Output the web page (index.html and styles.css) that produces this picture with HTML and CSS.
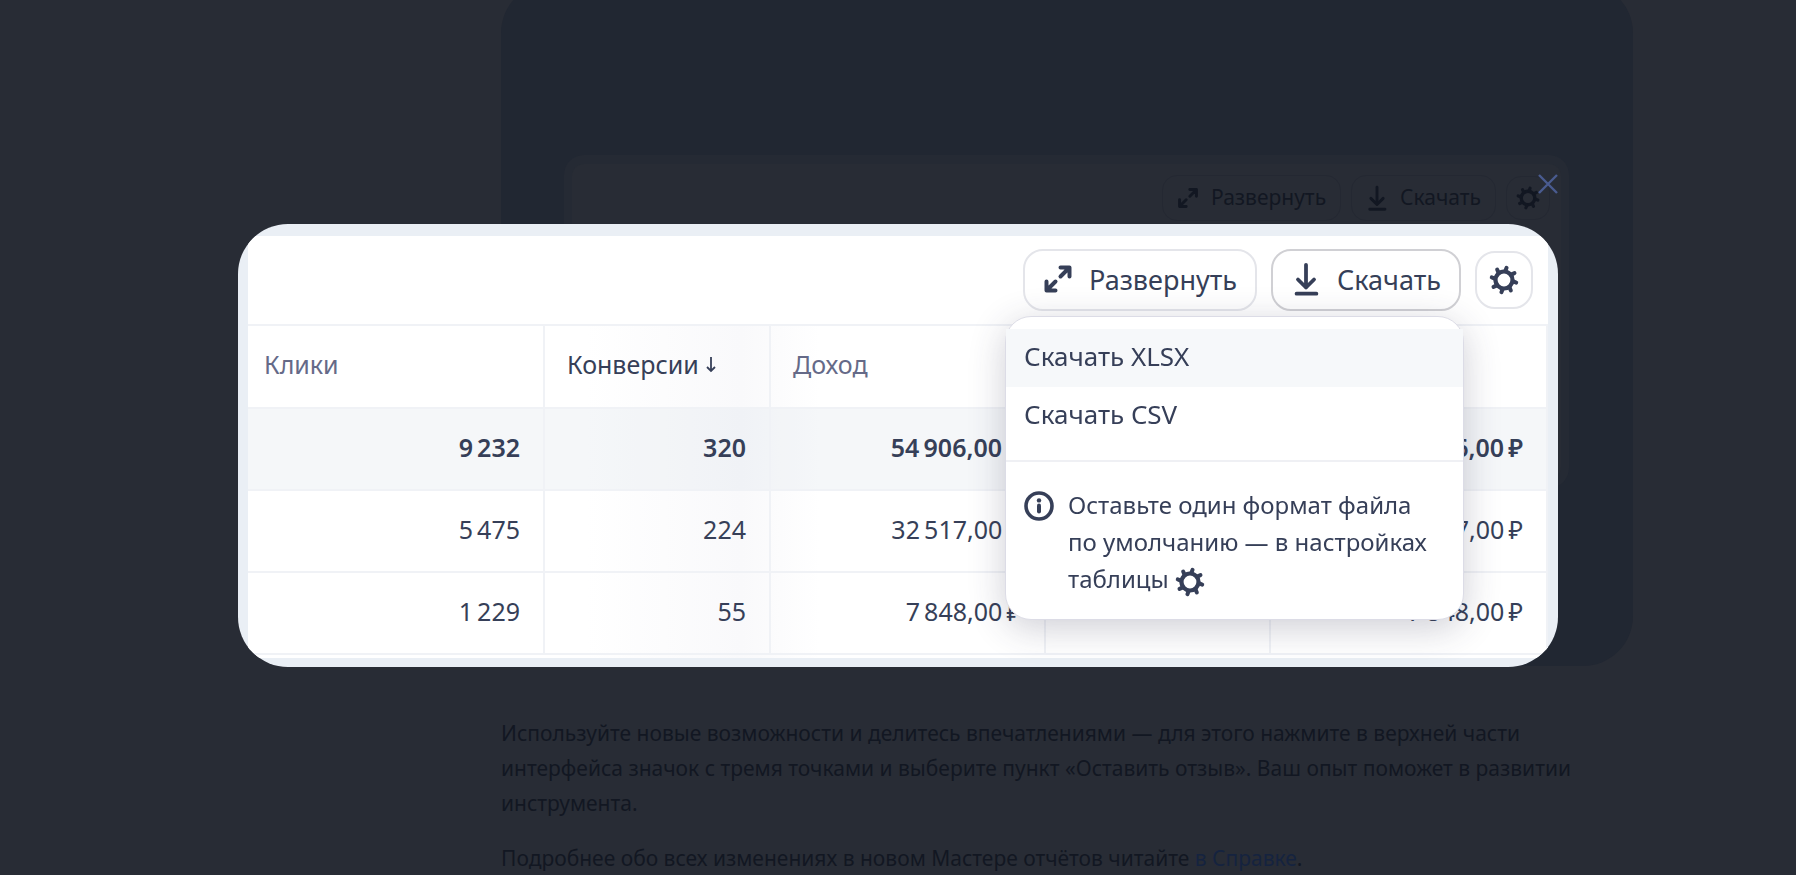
FILE: index.html
```html
<!DOCTYPE html>
<html lang="ru">
<head>
<meta charset="utf-8">
<title>Мастер отчётов</title>
<link rel="stylesheet" href="styles.css">
</head>
<body>
<svg class="sprite" aria-hidden="true">
  <symbol id="i-expand" viewBox="0 0 30 30"><path d="M17.500 3.500h9v9M26 4l-8.500 8.500M12.500 26.500h-9v-9M4 26l8.500-8.500" fill="none" stroke="currentColor" stroke-width="4" stroke-linecap="round" stroke-linejoin="round"/></symbol>
  <symbol id="i-download" viewBox="0 0 30 36"><path d="M15 3v24M6.500 18.500l8.500 8.500 8.500-8.500M5 33.500h21" fill="none" stroke="currentColor" stroke-width="4" stroke-linecap="round" stroke-linejoin="round"/></symbol>
  <symbol id="i-gear" viewBox="-15 -15 30 30">
    <circle r="8.500" fill="none" stroke="currentColor" stroke-width="4.200"/>
    <g stroke="currentColor" stroke-width="4" stroke-linecap="round" transform="rotate(10)">
      <path id="tooth" d="M-.2-9.500L.4-12.500"/>
      <use href="#tooth" transform="rotate(45)"/><use href="#tooth" transform="rotate(90)"/><use href="#tooth" transform="rotate(135)"/><use href="#tooth" transform="rotate(180)"/><use href="#tooth" transform="rotate(225)"/><use href="#tooth" transform="rotate(270)"/><use href="#tooth" transform="rotate(315)"/>
    </g>
  </symbol>
</svg>

<main class="page">
  <article class="article">
    <section class="card">
      <div class="preview">
        <div class="preview-inner">
          <div class="tool tool-wide"><svg><use href="#i-expand"/></svg>Развернуть</div>
          <div class="tool tool-down"><svg><use href="#i-download"/></svg>Скачать</div>
          <div class="tool tool-gear"><svg><use href="#i-gear"/></svg></div>
        </div>
      </div>
    </section>
    <p>Используйте новые возможности и делитесь впечатлениями — для этого нажмите в верхней части интерфейса значок с тремя точками и выберите пункт «Оставить отзыв». Ваш опыт поможет в развитии инструмента.</p>
    <p>Подробнее обо всех изменениях в новом Мастере отчётов читайте <a href="#help">в Справке</a>.</p>
  </article>
</main>

<div class="overlay">
  <div class="dialog" role="dialog" aria-label="Скачать отчёт">
    <button class="close" type="button" aria-label="Закрыть"><svg viewBox="0 0 20 20"><path d="M1 1l18 18M19 1L1 19" stroke="currentColor" stroke-width="2.400" fill="none"/></svg></button>
    <div class="frame">
      <div class="toolbar">
        <button class="btn btn-wide" type="button"><svg><use href="#i-expand"/></svg>Развернуть</button>
        <div class="download">
          <button class="btn btn-down" type="button"><svg><use href="#i-download"/></svg>Скачать</button>
          <div class="menu">
            <button class="item item-active" type="button">Скачать XLSX</button>
            <button class="item" type="button">Скачать CSV</button>
            <div class="hint">
              <svg class="info" viewBox="0 0 30 30"><circle cx="15" cy="15" r="13" fill="none" stroke="currentColor" stroke-width="3.600"/><circle cx="15" cy="9.400" r="2.200" fill="currentColor"/><path d="M15 14.500v6" stroke="currentColor" stroke-width="4" stroke-linecap="round"/></svg>
              <p>Оставьте один формат файла<br>по умолчанию — в настройках<br>таблицы <svg class="inline-gear"><use href="#i-gear"/></svg></p>
            </div>
          </div>
        </div>
        <button class="btn btn-gear" type="button" aria-label="Настройки"><svg><use href="#i-gear"/></svg></button>
      </div>
      <div class="sheet">
        <table class="grid">
          <colgroup><col class="c1"><col class="c2"><col class="c3"><col class="c4"><col class="c5"></colgroup>
          <thead><tr><th>Клики</th><th class="sorted">Конверсии <svg viewBox="0 0 12 18"><path d="M6 1v14M2 11l4 4 4-4" fill="none" stroke="currentColor" stroke-width="1.800"/></svg></th><th>Доход</th><th></th><th></th></tr></thead>
          <tbody>
            <tr class="total"><td>9&#8201;232</td><td>320</td><td>54&#8201;906,00&#8201;₽</td><td></td><td>54&#8201;906,00&#8201;₽</td></tr>
            <tr><td>5&#8201;475</td><td>224</td><td>32&#8201;517,00&#8201;₽</td><td></td><td>32&#8201;517,00&#8201;₽</td></tr>
            <tr><td>1&#8201;229</td><td>55</td><td>7&#8201;848,00&#8201;₽</td><td></td><td>7&#8201;848,00&#8201;₽</td></tr>
          </tbody>
        </table>
      </div>
    </div>
  </div>
</div>
</body>
</html>
```

FILE: styles.css
```css
* { box-sizing: border-box; }
html, body { height: 100%; }
body {
  margin: 0;
  overflow: hidden;
  background: #282c35;
  color: #121722;
  font-family: "Noto Sans", "Open Sans", sans-serif;
}
button { font: inherit; color: inherit; cursor: pointer; }
.sprite { position: absolute; width: 0; height: 0; }

.page { padding: 0 163px 0 501px; }
.article { margin-top: -17px; font-size: 21px; line-height: 35px; }
.article p { margin: 0 0 20px; }
.article a { color: #15233f; text-decoration: none; }
.card {
  margin-bottom: 50px;
  padding: 172px 64px 178px 63px;
  border-radius: 50px;
  background: #212732;
}
.preview {
  padding: 9px 8px;
  border-radius: 20px;
  background: #252a34;
}
.preview-inner {
  display: flex;
  justify-content: flex-end;
  align-items: center;
  gap: 10px;
  height: 315px;
  padding: 10px 11px 258px;
  border-radius: 12px;
  background: #282c35;
  font-size: 21px;
}
.tool {
  display: flex;
  align-items: center;
  height: 46px;
  padding: 0 14px;
  gap: 12px;
  border: 1px solid #242832;
  border-radius: 15px;
}
.tool svg { width: 22px; height: 26px; }
.tool-gear { height: 44px; padding: 0 9px; }
.tool-gear svg { width: 24px; }

.overlay {
  position: fixed;
  inset: 0;
  display: flex;
  justify-content: center;
  align-items: center;
  padding-top: 16px;
}
.dialog {
  position: relative;
  width: 1320px;
  max-width: 100%;
  color: #363f58;
}
.close {
  position: absolute;
  right: 0;
  top: -50px;
  width: 20px;
  height: 20px;
  padding: 0;
  border: 0;
  background: none;
  color: #4a5b90;
}
.close svg { display: block; width: 20px; height: 20px; }
.frame {
  overflow: hidden;
  padding: 12px 10px 9px;
  border-radius: 50px;
  background: #eaeff5;
}
.toolbar {
  display: flex;
  justify-content: flex-end;
  align-items: center;
  gap: 14px;
  height: 88px;
  padding: 0 15px 0 0;
  background: #fff;
  font-size: 27px;
}
.btn {
  display: flex;
  align-items: center;
  gap: 16px;
  height: 62px;
  padding: 0 18px 2px;
  border: 2px solid #e4e5ea;
  border-radius: 20px;
  background: #fff;
}
.btn svg { width: 30px; height: 34px; }
.btn-down { border-color: #d0d0d4; }
.btn-gear { height: 58px; padding: 0 12px; }
.download { position: relative; }
.menu {
  position: absolute;
  z-index: 1;
  top: 67px;
  right: -3px;
  width: 459px;
  padding: 12px 0 22px;
  border: 1px solid #dcdce6;
  border-radius: 26px;
  background: #fff;
  box-shadow: 0 8px 36px rgba(50, 50, 80, .24);
  font-size: 26px;
}
.item {
  display: block;
  width: 100%;
  height: 58px;
  padding: 0 18px 4px;
  border: 0;
  background: none;
  text-align: left;
}
.item-active { background: #f6f8fa; }
.hint {
  display: flex;
  gap: 14px;
  margin-top: 15px;
  padding: 24px 18px 0;
  border-top: 2px solid #eff0f4;
  font-size: 24px;
  line-height: 37px;
}
.hint p { margin: 0; white-space: nowrap; }
.info { flex: none; width: 30px; height: 30px; margin-top: 5px; }
.inline-gear { width: 30px; height: 30px; vertical-align: -9px; }

.sheet {
  padding-bottom: 3px;
  background: linear-gradient(90deg, #fff 26%, #f9f9fb 38%, #fff 44%);
}
.grid {
  width: 100%;
  table-layout: fixed;
  border-collapse: separate;
  border-spacing: 0;
  border-bottom: 2px solid #f0f2f6;
  font-size: 25px;
}
.c1 { width: 297px; }
.c2 { width: 226px; }
.c3 { width: 275px; }
.c4 { width: 225px; }
.grid th, .grid td {
  height: 82px;
  padding: 0 23px 4px;
  border-top: 2px solid #f0f2f6;
  border-right: 2px solid #f0f2f6;
  text-align: right;
  white-space: nowrap;
}
.grid th {
  height: 83px;
  padding: 0 16px 5px;
  text-align: left;
  font-weight: 400;
  color: #656a88;
}
.grid th + th { padding-left: 22px; }
.grid th.sorted { color: #363f58; }
.sorted svg { width: 12px; height: 18px; }
.total td { background: rgba(218, 226, 234, .28); font-weight: 600; }
```
